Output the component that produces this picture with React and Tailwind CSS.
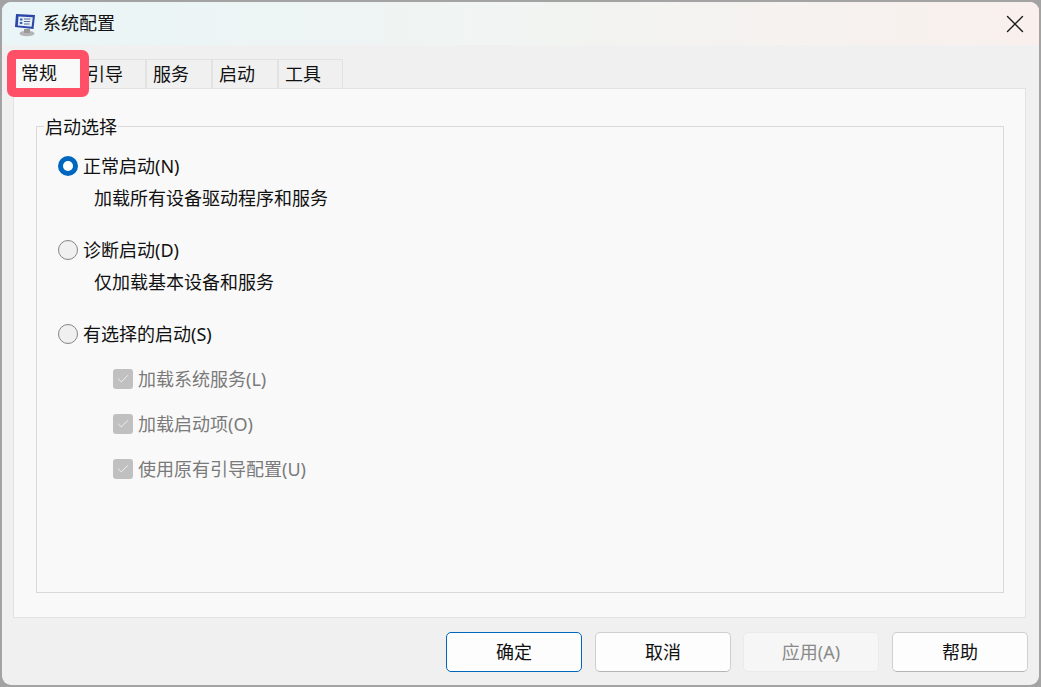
import { Check, X } from "lucide-react";

const font = { fontFamily: '"Noto Sans", "Noto Sans CJK SC", "Liberation Sans", sans-serif' };

function Radio({ checked, label, hint }) {
  return (
    <div>
      <div className="flex h-[24px] items-center gap-[5px]">
        {checked ? (
          <span className="flex size-[20px] items-center justify-center rounded-full bg-[#0067c0]">
            <span className="size-[10px] rounded-full bg-white" />
          </span>
        ) : (
          <span className="size-[20px] rounded-full border border-[#858585] bg-[#f0f0f0]" />
        )}
        <span className="text-[18px] leading-[24px] text-[#111]">{label}</span>
      </div>
      {hint ? <p className="mt-[8px] ml-[36px] h-[24px] text-[18px] leading-[24px] text-[#111]">{hint}</p> : null}
    </div>
  );
}

function DisabledCheck({ label }) {
  return (
    <div className="flex h-[24px] items-center gap-[5px]">
      <span className="flex size-[20px] items-center justify-center rounded-[3px] bg-[#c0c0c0]">
        <Check size={14} strokeWidth={1.25} className="text-white" />
      </span>
      <span className="text-[18px] leading-[24px] text-[#7a7a7a]">{label}</span>
    </div>
  );
}

function Btn({ children, primary, disabled, className = "" }) {
  let cls = "border-[#cfcfcf] border-b-[#b5b5b5] bg-[#fdfdfd] text-[#111]";
  if (primary) cls = "border-[#0067c0] bg-[#fdfdfd] text-[#111]";
  if (disabled) cls = "border-[#ebebeb] bg-[#f6f6f6] text-[#8a8a8a]";
  return (
    <div className={`flex h-[40px] w-[136px] items-center justify-center rounded-[5px] border text-[18px] ${cls} ${className}`}>
      {children}
    </div>
  );
}

function Tab({ children, className = "w-[66px]" }) {
  return (
    <div className={`flex h-[29px] items-center border border-b-0 border-[#e2e2e2] bg-[#f0f0f0] pl-[6px] text-[18px] text-[#111] ${className}`}>
      {children}
    </div>
  );
}

export default function App() {
  return (
    <div className="h-[687px] w-[1041px] overflow-hidden bg-[#a3a3a3] p-[2px]" style={font}>
      <div className="relative flex h-[683px] w-[1037px] flex-col overflow-hidden rounded-[9px] bg-[#f0f0f0]">
        <div className="flex h-[43px] shrink-0 items-center bg-gradient-to-r from-[#e9f5f7] via-[#f1f4f2] to-[#f9f0ed] pl-[12px] pr-[9px]">
          <svg width="23" height="25" viewBox="0 0 23 25" className="mt-[2px]">
            <ellipse cx="13" cy="21.5" rx="7.5" ry="2.8" fill="#b4b4b4" />
            <rect x="10" y="17" width="6" height="4" fill="#9a9a9a" />
            <path d="M2 2 L21 3 L19.5 17 L1 15 Z" fill="#2b45a8" />
            <path d="M4.5 4.5 L18.8 5.2 L17.6 14.8 L3.8 13.4 Z" fill="#e6eef8" />
            <path d="M6 6.5 H8.5 V8.5 H6 Z M5.8 10 H8.3 V12 H5.8 Z" fill="#2f62b8" />
            <path d="M10 7 H16.5 M10 9.5 H16 M10 12 H15.5" stroke="#5a6f94" strokeWidth="1" />
          </svg>
          <span className="mb-[2px] ml-[6px] text-[18px] leading-[24px] text-[#111]">系统配置</span>
          <X size={30} strokeWidth={1.1} className="ml-auto text-[#1a1a1a]" />
        </div>

        <div className="flex min-h-0 flex-1 flex-col px-[11px] pt-[14px]">
          <div className="flex h-[29px] shrink-0">
            <Tab className="w-[67px]">常规</Tab>
            <Tab>引导</Tab>
            <Tab>服务</Tab>
            <Tab>启动</Tab>
            <Tab className="w-[65px]">工具</Tab>
          </div>
          <div className="h-[530px] w-[1013px] shrink-0 border border-[#e2e2e2] bg-[#f9f9f9] px-[22px] pb-[24px] pt-[37px]">
            <div className="relative h-[467px] w-[968px] border border-[#d9d9d9]">
              <span className="absolute left-[7px] top-[-12px] bg-[#f9f9f9] px-px text-[18px] leading-[24px] text-[#111]">启动选择</span>
              <div className="flex flex-col pl-[21px] pt-[27px]">
                <Radio checked label="正常启动(N)" hint="加载所有设备驱动程序和服务" />
                <div className="mt-[28px]">
                  <Radio label="诊断启动(D)" hint="仅加载基本设备和服务" />
                </div>
                <div className="mt-[28px]">
                  <Radio label="有选择的启动(S)" />
                </div>
                <div className="ml-[55px] mt-[21px] flex flex-col gap-[21px]">
                  <DisabledCheck label="加载系统服务(L)" />
                  <DisabledCheck label="加载启动项(O)" />
                  <DisabledCheck label="使用原有引导配置(U)" />
                </div>
              </div>
            </div>
          </div>
          <div className="mt-[14px] flex justify-end gap-[13px]">
            <Btn primary>确定</Btn>
            <Btn className="mr-[-1px]">取消</Btn>
            <Btn disabled>应用(A)</Btn>
            <Btn>帮助</Btn>
          </div>
        </div>

        <div className="absolute left-[5px] top-[48px] flex h-[47px] w-[82px] items-center rounded-[7px] border-[9px] border-[#ff5068] bg-[#f9f9f9] pl-[5px] text-[18px] text-[#111]">
          常规
        </div>
      </div>
    </div>
  );
}
